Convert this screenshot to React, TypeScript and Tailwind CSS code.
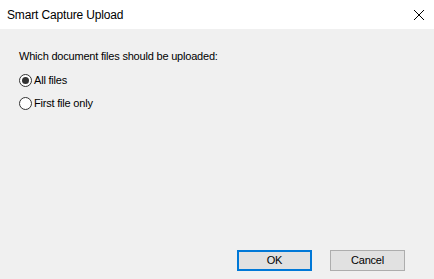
export default function App() {
  return (
    <div className="w-[434px] h-[279px] flex flex-col bg-[#f0f0f0] text-[11px] text-black" style={{ fontFamily: '"Liberation Sans", Arial, sans-serif' }}>
      <div className="h-[29px] bg-white flex items-center justify-between pl-[7px] pr-[8px]">
        <span className="leading-none text-[12px] tracking-[-0.15px]">Smart Capture Upload</span>
        <svg width="12" height="12" viewBox="0 0 12 12" className="mr-[1px]">
          <path d="M1 1 L11 11 M11 1 L1 11" stroke="#000" strokeWidth="1" />
        </svg>
      </div>
      <div className="flex-1 flex flex-col pl-[19px] pt-[19px] tracking-[-0.2px]">
        <div className="leading-[16px]">Which document files should be uploaded:</div>
        <label className="flex items-center gap-[2px] mt-[9px] h-[15px]">
          <span className="w-[13px] h-[13px] rounded-full border border-[#333] bg-white flex items-center justify-center">
            <span className="w-[7px] h-[7px] rounded-full bg-[#333]" />
          </span>
          <span>All files</span>
        </label>
        <label className="flex items-center gap-[2px] mt-[8px] h-[15px]">
          <span className="w-[13px] h-[13px] rounded-full border border-[#333] bg-white" />
          <span>First file only</span>
        </label>
        <div className="flex-1" />
        <div className="flex gap-[18px] pl-[218px] pb-[8px]">
          <button className="w-[75px] h-[21px] border-2 border-[#0078d7] bg-[#e1e1e1] leading-none">OK</button>
          <button className="w-[75px] h-[21px] border border-[#adadad] bg-[#e1e1e1] leading-none">Cancel</button>
        </div>
      </div>
    </div>
  );
}
